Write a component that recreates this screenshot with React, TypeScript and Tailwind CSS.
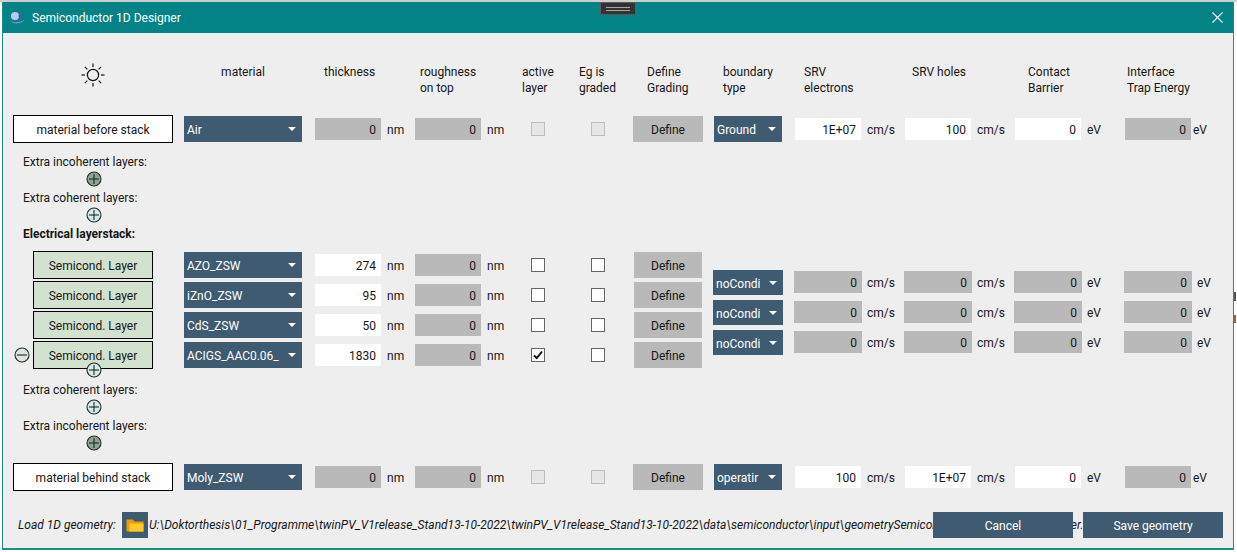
const rays = [0, 45, 90, 135, 180, 225, 270, 315];

function Sun() {
  return (
    <svg width="24" height="24" viewBox="0 0 24 24" fill="none" stroke="#111" strokeWidth="1.2">
      <circle cx="12" cy="12" r="5.6" />
      {rays.map((r) => (
        <line key={r} x1="12" y1="0.5" x2="12" y2="4" transform={`rotate(${r} 12 12)`} />
      ))}
    </svg>
  );
}

function TitleLogo() {
  return (
    <svg width="18" height="14" viewBox="0 0 18 14">
      <circle cx="6" cy="5" r="4" fill="#c4c6f0" />
      <circle cx="11" cy="5" r="1.4" fill="#2a5fc0" />
      <circle cx="14.5" cy="5" r="1.4" fill="#2a5fc0" />
      <path d="M0.5 9.5 C5 12.5 11 11.5 16 8.5 C12 13 5 14 0.5 9.5 Z" fill="#8a88e0" />
    </svg>
  );
}

function Round({ kind, fill }: { kind: 'plus' | 'minus'; fill: string }) {
  return (
    <svg width="16" height="16" viewBox="0 0 16 16" className="block">
      <circle cx="8" cy="8" r="7" fill={fill} stroke="#1c2b2b" strokeWidth="1.1" />
      <line x1="3" y1="8" x2="13" y2="8" stroke="#1c2b2b" strokeWidth="1.1" />
      {kind === 'plus' && <line x1="8" y1="3" x2="8" y2="13" stroke="#1c2b2b" strokeWidth="1.1" />}
    </svg>
  );
}

function FolderIcon() {
  return (
    <svg width="18" height="16" viewBox="0 0 18 16">
      <path d="M0.5 2.5 H6.5 L8.5 4.5 H17.5 V14.5 H0.5 Z" fill="#f09a00" />
      <path d="M3.5 6.5 H17.5 V14.5 H3.5 Z" fill="#ffc928" />
    </svg>
  );
}

function Combo({ text, w, h = 'h-[26px]' }: { text: string; w: string; h?: string }) {
  return (
    <div className={`${w} ${h} bg-[#3f5b72] text-white flex items-center pl-[3px] shrink-0`}>
      <span className="flex-1 min-w-0 overflow-hidden whitespace-nowrap pt-[2px]">{text}</span>
      <span className="w-[23px] shrink-0 flex justify-center pl-[3px]">
        <span className="w-0 h-0 border-x-[4px] border-x-transparent border-t-[4px] border-t-white" />
      </span>
    </div>
  );
}

function Field({ v, on, w, unit, uw, gap = 'pl-[6px]' }: { v: string; on?: boolean; w: string; unit: string; uw: string; gap?: string }) {
  return (
    <div className="flex items-center shrink-0">
      <div className={`${w} h-[22px] flex items-center justify-end pr-[5px] pt-[2px] ${on ? 'bg-white' : 'bg-[#b9b9b9]'}`}>{v}</div>
      <span className={`${uw} ${gap} pt-[2px]`}>{unit}</span>
    </div>
  );
}

function Check({ on, off }: { on?: boolean; off?: boolean }) {
  return (
    <div className={`w-[14px] h-[14px] shrink-0 border flex items-center justify-center ${off ? 'border-[#bdbdbd] bg-[#e6e6e6]' : 'border-[#666] bg-white'}`}>
      {on && (
        <svg width="10" height="10" viewBox="0 0 10 10" fill="none" stroke="#111" strokeWidth="2">
          <path d="M1 5.5 L3.8 8 L9 1.5" />
        </svg>
      )}
    </div>
  );
}

function Extra({ text, fill }: { text: string; fill: string }) {
  return (
    <div className="h-[36px]">
      <div className="pl-[20px] h-[18px] leading-[18px] whitespace-nowrap">{text}</div>
      <div className="w-[181px] h-[16px] flex justify-center">
        <Round kind="plus" fill={fill} />
      </div>
    </div>
  );
}

function OuterRow({ name, material, boundary, e, h }: { name: string; material: string; boundary: string; e: string; h: string }) {
  return (
    <div className="flex items-center h-[28px] pl-[10px]">
      <div className="w-[160px] h-full shrink-0 border border-black bg-white flex items-center justify-center pt-[2px]">{name}</div>
      <div className="ml-[11px]">
        <Combo text={material} w="w-[118px]" />
      </div>
      <div className="ml-[13px] flex">
        <Field v="0" w="w-[66px]" unit="nm" uw="w-[34px]" />
        <Field v="0" w="w-[66px]" unit="nm" uw="w-[50px]" />
      </div>
      <Check off />
      <div className="ml-[46px]">
        <Check off />
      </div>
      <div className="ml-[28px] w-[70px] h-[26px] bg-[#b9b9b9] flex items-center justify-center pt-[2px]">Define</div>
      <div className="ml-[11px]">
        <Combo text={boundary} w="w-[68px]" />
      </div>
      <div className="ml-[13px] flex">
        <Field v={e} on w="w-[66px]" unit="cm/s" uw="w-[44px]" />
        <Field v={h} on w="w-[66px]" unit="cm/s" uw="w-[44px]" />
        <Field v="0" on w="w-[66px]" unit="eV" uw="w-[44px]" />
        <Field v="0" w="w-[66px]" unit="eV" uw="w-[30px]" gap="pl-[2px]" />
      </div>
    </div>
  );
}

function LayerRow({ material, thick, active, minus }: { material: string; thick: string; active?: boolean; minus?: boolean }) {
  return (
    <div className="flex items-center h-[30px] pl-[11px]">
      <div className="w-[19px] shrink-0">{minus && <Round kind="minus" fill="#dde5dd" />}</div>
      <div className="w-[120px] h-[28px] shrink-0 border border-black bg-[#d2e2ce] flex items-center justify-center pt-[2px]">Semicond. Layer</div>
      <div className="ml-[31px]">
        <Combo text={material} w="w-[118px]" />
      </div>
      <div className="ml-[13px] flex">
        <Field v={thick} on w="w-[66px]" unit="nm" uw="w-[34px]" />
        <Field v="0" w="w-[66px]" unit="nm" uw="w-[50px]" />
      </div>
      <Check on={active} />
      <div className="ml-[46px]">
        <Check />
      </div>
      <div className="ml-[29px] w-[68px] h-[26px] bg-[#b9b9b9] flex items-center justify-center pt-[2px]">Define</div>
    </div>
  );
}

function BoundaryRow() {
  return (
    <div className="flex items-start h-[30px]">
      <Combo text="noCondi" w="w-[70px]" h="h-[25px]" />
      <div className="ml-[11px] mt-[1px] flex">
        <Field v="0" w="w-[68px]" unit="cm/s" uw="w-[42px]" gap="pl-[5px]" />
        <Field v="0" w="w-[68px]" unit="cm/s" uw="w-[42px]" gap="pl-[5px]" />
        <Field v="0" w="w-[68px]" unit="eV" uw="w-[42px]" gap="pl-[5px]" />
        <Field v="0" w="w-[68px]" unit="eV" uw="w-[30px]" gap="pl-[5px]" />
      </div>
    </div>
  );
}

const headers: [string, string[]][] = [
  ['w-[96px]', ['thickness']],
  ['w-[102px]', ['roughness', 'on top']],
  ['w-[57px]', ['active', 'layer']],
  ['w-[68px]', ['Eg is', 'graded']],
  ['w-[76px]', ['Define', 'Grading']],
  ['w-[81px]', ['boundary', 'type']],
  ['w-[108px]', ['SRV', 'electrons']],
  ['w-[116px]', ['SRV holes']],
  ['w-[99px]', ['Contact', 'Barrier']],
  ['w-[100px]', ['Interface', 'Trap Energy']],
];

export default function App() {
  return (
    <div className="relative w-[1237px] h-[552px] overflow-hidden bg-white text-[12px] leading-[16px] text-[#161616] [font-family:Roboto,sans-serif]">
      <div className="h-[2px] bg-[#cfcfcf]" />
      <div className="ml-[2px] w-[1232px] h-[548px] border-x border-b-2 border-[#1a8f90] bg-[#eeeeee] flex flex-col">
        <div className="h-[31px] shrink-0 bg-[#048387] text-white flex items-center pl-[6px] pr-[10px]">
          <TitleLogo />
          <span className="ml-[5px]">Semiconductor 1D Designer</span>
          <svg className="ml-auto" width="11" height="11" viewBox="0 0 11 11" stroke="#fff" strokeWidth="1.1">
            <line x1="0.5" y1="0.5" x2="10.5" y2="10.5" />
            <line x1="10.5" y1="0.5" x2="0.5" y2="10.5" />
          </svg>
        </div>

        <div className="flex mt-[31px] h-[32px] shrink-0">
          <div className="w-[181px] pr-[2px] flex justify-center -mt-[1px]">
            <Sun />
          </div>
          <div className="w-[118px] text-center">material</div>
          <div className="w-[22px]" />
          {headers.map(([w, lines]) => (
            <div key={lines[0]} className={`${w} shrink-0 whitespace-nowrap`}>
              {lines.map((l) => (
                <div key={l}>{l}</div>
              ))}
            </div>
          ))}
        </div>

        <div className="mt-[19px]">
          <OuterRow name="material before stack" material="Air" boundary="Ground" e="1E+07" h="100" />
        </div>

        <div className="mt-[10px]">
          <Extra text="Extra incoherent layers:" fill="#8fa58f" />
          <Extra text="Extra coherent layers:" fill="#d6eae6" />
        </div>
        <div className="pl-[20px] h-[18px] leading-[18px] font-bold">Electrical layerstack:</div>

        <div className="mt-[7px] flex">
          <div>
            <LayerRow material="AZO_ZSW" thick="274" />
            <LayerRow material="iZnO_ZSW" thick="95" />
            <LayerRow material="CdS_ZSW" thick="50" />
            <LayerRow material="ACIGS_AAC0.06_CIGS" thick="1830" active minus />
          </div>
          <div className="ml-[11px] pt-[20px]">
            <BoundaryRow />
            <BoundaryRow />
            <BoundaryRow />
          </div>
        </div>

        <div className="relative z-10 -mt-[8px] w-[181px] h-[16px] flex justify-center">
          <Round kind="plus" fill="#d6eae6" />
        </div>
        <div className="mt-[3px]">
          <Extra text="Extra coherent layers:" fill="#d6eae6" />
          <Extra text="Extra incoherent layers:" fill="#8fa58f" />
        </div>

        <div className="mt-[10px]">
          <OuterRow name="material behind stack" material="Moly_ZSW" boundary="operatir" e="100" h="1E+07" />
        </div>

        <div className="mt-[21px] flex items-center h-[26px] pl-[15px] italic">
          <span className="w-[104px] shrink-0 whitespace-nowrap">Load 1D geometry:</span>
          <div className="w-[26px] h-[26px] shrink-0 bg-[#3f5b72] flex items-center justify-center">
            <FolderIcon />
          </div>
          <div className="w-[935px] shrink-0 overflow-hidden whitespace-nowrap pl-[1px]">
            U:\Doktorthesis\01_Programme\twinPV_V1release_Stand13-10-2022\twinPV_V1release_Stand13-10-2022\data\semiconductor\input\geometrySemiconductor\Standard_CIG_Layer.
          </div>
          <div className="relative -ml-[150px] w-[140px] h-[26px] shrink-0 bg-[#3f5b72] text-white not-italic flex items-center justify-center pt-[2px]">Cancel</div>
          <div className="ml-[10px] w-[140px] h-[26px] shrink-0 bg-[#3f5b72] text-white not-italic flex items-center justify-center pt-[2px]">Save geometry</div>
        </div>
      </div>

      <div className="absolute left-[600px] top-[2px] w-[36px] h-[13px] bg-[#333333] border border-[#5a5a5a] flex flex-col items-center justify-center gap-[2px]">
        <div className="w-[24px] h-px bg-[#a8a8a8]" />
        <div className="w-[24px] h-px bg-[#a8a8a8]" />
      </div>
      <div className="absolute left-[1234px] top-[292px] w-[2px] h-[9px] bg-[#555555]" />
      <div className="absolute left-[1234px] top-[315px] w-[2px] h-[8px] bg-[#a0603c]" />
    </div>
  );
}
